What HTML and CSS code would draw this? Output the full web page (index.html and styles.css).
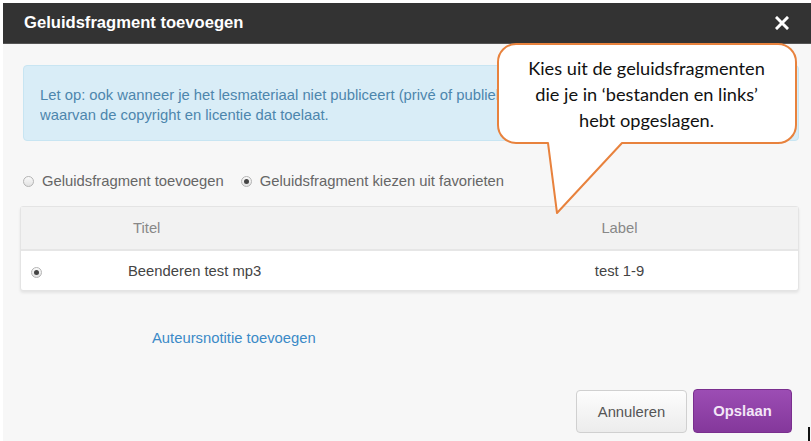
FILE: index.html
```html
<!DOCTYPE html>
<html lang="nl">
<head>
    <meta charset="UTF-8">
    <meta name="viewport" content="width=device-width, initial-scale=1.0">
    <title>Geluidsfragment toevoegen</title>
    <link rel="stylesheet" href="styles.css">
</head>
<body>

<div class="modal">
    <div class="modal-header">
        <h1>Geluidsfragment toevoegen</h1>
        <svg class="close" width="14" height="14" viewBox="0 0 14 14">
            <path d="M2 2 L12 12 M12 2 L2 12" stroke="#fff" stroke-width="3" stroke-linecap="square"/>
        </svg>
    </div>

    <div class="modal-body">
        <div class="alert">
            <div class="alert-text">
                Let op: ook wanneer je het lesmateriaal niet publiceert (privé of publiek), mag je alleen geluidsfragmenten gebruiken<br>
                waarvan de copyright en licentie dat toelaat.
            </div>
        </div>

        <div class="choice">
            <label><span class="radio"></span>Geluidsfragment toevoegen</label>
            <label><span class="radio checked"></span>Geluidsfragment kiezen uit favorieten</label>
        </div>

        <div class="files">
            <div class="files-head">
                <div></div>
                <div class="col-title">Titel</div>
                <div class="col-label">Label</div>
            </div>
            <div class="files-row">
                <div class="col-pick"><span class="radio checked"></span></div>
                <div class="col-title">Beenderen test mp3</div>
                <div class="col-label">test 1-9</div>
            </div>
        </div>

        <a class="note-link" href="#">Auteursnotitie toevoegen</a>
    </div>

    <div class="modal-footer">
        <button class="btn">Annuleren</button>
        <button class="btn btn-save">Opslaan</button>
    </div>
</div>

<div class="callout">
    <svg width="301" height="172" viewBox="0 0 301 172">
        <path d="M19 1 H281 A18 18 0 0 1 299 19 V82 A18 18 0 0 1 281 100 H125 L60 170 L51 100 H19 A18 18 0 0 1 1 82 V19 A18 18 0 0 1 19 1 Z"
              fill="#fff" stroke="#e8823d" stroke-width="2" stroke-linejoin="round"/>
    </svg>
    <p>Kies uit de geluidsfragmenten<br>die je in ‘bestanden en links’<br>hebt opgeslagen.</p>
</div>

<div class="cursor-mark"></div>

</body>
</html>
```

FILE: styles.css
```css
html, body {
    margin: 0;
    height: 441px;
    overflow: hidden;
}
body {
    padding: 3px 0 0 3px;
    box-sizing: border-box;
    background: #fff;
    font-family: "Liberation Sans", Arial, sans-serif;
    font-size: 14.8px;
    color: #555;
}
.modal {
    height: 100%;
    background: #f7f7f7;
    display: flex;
    flex-direction: column;
}
.modal-header {
    height: 40px;
    background: #333;
    border-bottom: 1px solid #555;
    padding: 0 22px 0 21px;
    display: flex;
    align-items: center;
    justify-content: space-between;
}
.modal-header h1 {
    margin: 0;
    font-size: 16.6px;
    font-weight: bold;
    color: #fff;
}
.modal-body {
    padding: 21px 12px 0 17px;
    flex: 1;
}
.alert {
    margin-left: 3px;
    padding: 19px 16px 15px;
    background: #d9edf7;
    border: 1px solid #c8e5f2;
    border-radius: 4px;
    color: #4d86ad;
    line-height: 20px;
}
.alert-text {
    width: 457px;
    white-space: nowrap;
    overflow: hidden;
}
.choice {
    margin: 31px 0 0 3px;
    display: flex;
    gap: 17px;
    line-height: 18px;
    color: #666;
}
.choice label {
    display: flex;
    align-items: center;
    gap: 8px;
}
.radio {
    display: inline-block;
    width: 9px;
    height: 9px;
    border: 1px solid #b4b4b4;
    border-radius: 50%;
    background: linear-gradient(#fafafa, #e2e2e2);
    position: relative;
}
.radio.checked::after {
    content: "";
    position: absolute;
    left: 2px;
    top: 2px;
    width: 5px;
    height: 5px;
    border-radius: 50%;
    background: #444;
}
.files {
    margin-top: 16px;
    border: 1px solid #e4e4e4;
    border-radius: 3px;
    background: #fff;
    box-shadow: 0 2px 3px rgba(0, 0, 0, 0.08);
}
.files-head, .files-row {
    display: grid;
    grid-template-columns: 95px 325px 1fr;
    align-items: center;
}
.files-head {
    height: 42px;
    background: #f2f2f2;
    border-bottom: 2px solid #e6e6e6;
    color: #888;
}
.files-head .col-title {
    padding-left: 17px;
}
.files-row {
    height: 39px;
    color: #444;
}
.files-row .col-title {
    padding-left: 12px;
}
.col-label {
    text-align: center;
}
.col-pick {
    padding: 4px 0 0 10px;
}
.note-link {
    display: block;
    margin: 38px 0 0 132px;
    line-height: 18px;
    color: #3b8ac7;
    text-decoration: none;
}
.modal-footer {
    display: flex;
    justify-content: flex-end;
    gap: 6px;
    padding: 0 19px 8px 0;
}
.btn {
    height: 44px;
    padding: 0;
    border-radius: 4px;
    font-family: "Liberation Sans", Arial, sans-serif;
    font-size: 14.8px;
}
.btn:first-child {
    width: 111px;
    margin-top: 1px;
    height: 43px;
    border: 1px solid #d0d0d0;
    background: linear-gradient(#fdfdfd, #ececec);
    color: #555;
}
.btn-save {
    width: 99px;
    border: 1px solid #7a2f8e;
    background: linear-gradient(#9c4db4, #84389b);
    color: #f3e6f7;
    font-weight: bold;
}
.callout {
    position: absolute;
    left: 497px;
    top: 43px;
    width: 301px;
    height: 172px;
}
.callout svg {
    position: absolute;
    left: 0;
    top: 0;
}
.callout p {
    position: relative;
    margin: 12px 0 0;
    width: 299px;
    text-align: center;
    font-family: Lato, "Open Sans", sans-serif;
    font-size: 18.2px;
    line-height: 26px;
    color: #111;
}
.cursor-mark {
    position: absolute;
    left: 808px;
    top: 427px;
    width: 2px;
    height: 14px;
    background: #111;
}
```
